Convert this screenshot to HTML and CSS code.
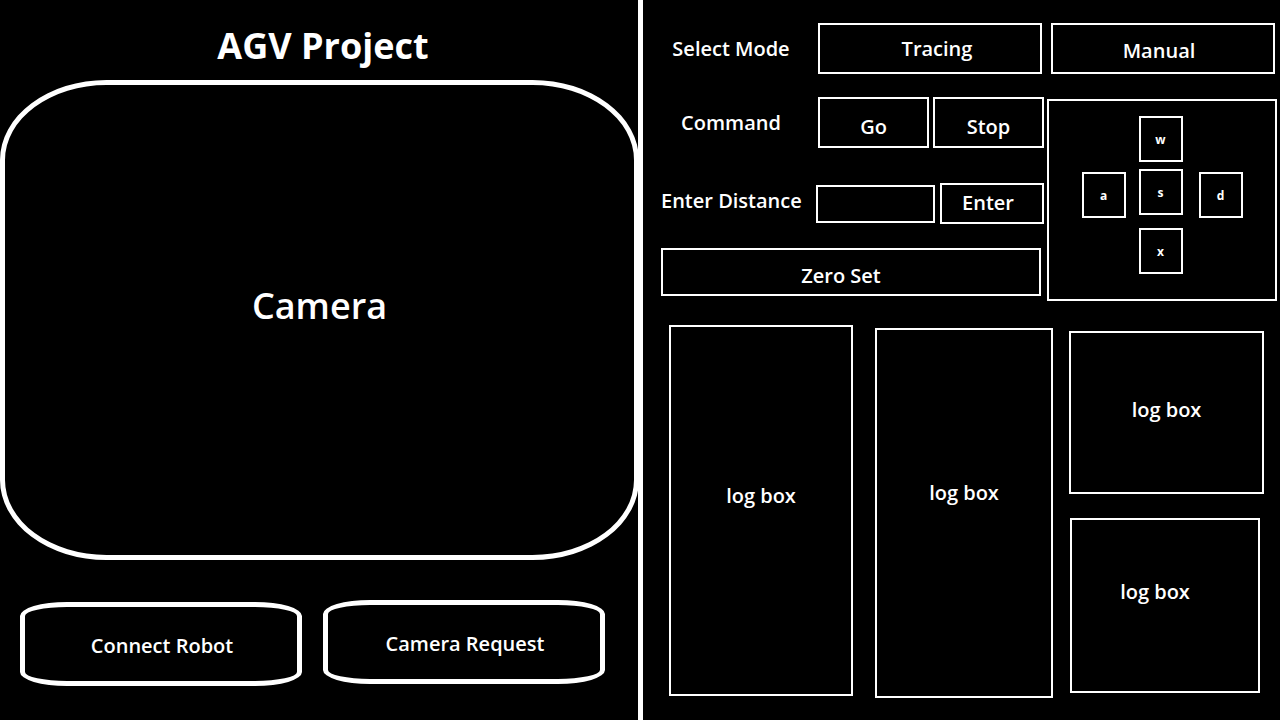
FILE: index.html
```html
<!DOCTYPE html>
<html lang="en">
<head>
<meta charset="utf-8">
<title>AGV Project</title>
<meta name="viewport" content="width=device-width, initial-scale=1">
<link rel="stylesheet" href="styles.css">
</head>
<body>
<div class="page">
  <main class="view">
    <h1 class="title">AGV Project</h1>
    <section class="camera">Camera</section>
    <div class="actions">
      <button type="button" class="action action-low">Connect Robot</button>
      <button type="button" class="action">Camera Request</button>
    </div>
  </main>
  <aside class="panel">
    <div class="row row-mode" role="group" aria-labelledby="mode-label">
      <span class="label" id="mode-label">Select Mode</span>
      <div class="choices">
        <button type="button" class="box tracing">Tracing</button>
        <button type="button" class="box manual">Manual</button>
      </div>
    </div>
    <div class="drive">
      <div class="controls">
        <div class="row row-command" role="group" aria-labelledby="command-label">
          <span class="label" id="command-label">Command</span>
          <div class="commands">
            <button type="button" class="box">Go</button>
            <button type="button" class="box">Stop</button>
          </div>
        </div>
        <form class="row row-distance">
          <label class="label" for="distance">Enter Distance</label>
          <div class="distance">
            <input class="field" id="distance" type="text">
            <button type="button" class="box">Enter</button>
          </div>
        </form>
        <button type="button" class="box zero">Zero Set</button>
      </div>
      <div class="keypad">
        <button type="button" class="key key-w">w</button>
        <button type="button" class="key key-a">a</button>
        <button type="button" class="key key-s">s</button>
        <button type="button" class="key key-d">d</button>
        <button type="button" class="key key-x">x</button>
      </div>
    </div>
    <div class="logs">
      <section class="log log-tall log-first">log box</section>
      <section class="log log-tall log-second">log box</section>
      <div class="log-stack">
        <section class="log log-upper">log box</section>
        <section class="log log-lower">log box</section>
      </div>
    </div>
  </aside>
</div>
</body>
</html>
```
FILE: styles.css
```css
* {
  box-sizing: border-box;
}

body {
  margin: 0;
  background: #000;
  color: #fff;
  font: 600 20px/28px "Open Sans", "Noto Sans", sans-serif;
}

button,
input {
  margin: 0;
  padding: 0;
  border: 2px solid #fff;
  border-radius: 0;
  background: #000;
  color: inherit;
  font: inherit;
}

.page {
  display: grid;
  grid-template-columns: minmax(0, 1fr) minmax(0, 1fr);
  min-height: 100vh;
}

/* Camera side */
.view {
  display: flex;
  flex-direction: column;
  margin-right: 2px;
  padding-bottom: 34px;
}

.title {
  margin: 0;
  padding: 22px 0 10px 8px;
  font-size: 36px;
  font-weight: 700;
  line-height: 48px;
  text-align: center;
}

.camera {
  flex: 1;
  display: flex;
  align-items: center;
  justify-content: center;
  margin-right: -1px;
  padding-bottom: 28px;
  border: 5px solid #fff;
  border-radius: calc(100% / 6);
  font-size: 36px;
  line-height: 48px;
}

.actions {
  display: flex;
  align-items: flex-start;
  gap: 21px;
  padding: 40px 33px 0 20px;
}

.action {
  flex: 1;
  height: 84px;
  padding: 4px 0 0 2px;
  border-width: 5px;
  border-radius: calc(100% / 6);
}

.action-low {
  margin-top: 2px;
}

/* Control side */
.panel {
  display: flex;
  flex-direction: column;
  margin-left: -2px;
  padding: 23px 3px 22px 18px;
  border-left: 5px solid #fff;
}

.row {
  display: grid;
  grid-template-columns: 140px minmax(0, 1fr);
  align-items: center;
  column-gap: 17px;
}

.label {
  text-align: center;
  white-space: nowrap;
}

.row-mode {
  margin-right: 2px;
}

.choices {
  display: grid;
  grid-template-columns: 1fr 1fr;
  grid-auto-rows: 51px;
  gap: 9px;
}

.tracing {
  padding-left: 14px;
}

.manual {
  padding: 4px 8px 0 0;
}

.drive {
  display: grid;
  grid-template-columns: minmax(0, 383fr) minmax(0, 230fr);
  gap: 3px;
  margin-top: 23px;
}

.controls {
  display: flex;
  flex-direction: column;
}

.commands {
  display: grid;
  grid-template-columns: 1fr 1fr;
  grid-auto-rows: 51px;
  gap: 4px;
}

.commands .box {
  padding-top: 8px;
}

.row-distance {
  column-gap: 15px;
  margin-top: 35px;
}

.row-distance .label {
  padding-bottom: 6px;
}

.distance {
  display: grid;
  grid-template-columns: minmax(0, 119fr) minmax(0, 104fr);
  grid-auto-rows: 41px;
  align-items: center;
  gap: 5px;
}

.distance .box {
  height: 100%;
  padding: 0 8px 2px 0;
}

.field {
  width: 100%;
  height: 38px;
  padding: 0 8px;
}

.zero {
  height: 48px;
  margin: 24px 3px 0 0;
  padding: 8px 20px 0 0;
}

.keypad {
  display: grid;
  grid-template-columns: 44px 13px 44px 16px 44px;
  grid-template-rows: 46px 7px 49px 10px 46px;
  justify-content: center;
  margin-top: 2px;
  padding: 15px 0 25px;
  border: 2px solid #fff;
}

.key {
  height: 46px;
  padding-top: 2px;
  font-size: 12px;
  font-weight: 700;
  line-height: 16px;
}

.key-w { grid-area: 1 / 3; }
.key-a { grid-area: 3 / 1; align-self: end; }
.key-s { grid-area: 3 / 3; }
.key-d { grid-area: 3 / 5; align-self: end; }
.key-x { grid-area: 5 / 3; }

/* Logs */
.logs {
  flex: 1;
  display: grid;
  grid-template-columns: minmax(0, 184fr) 22px minmax(0, 178fr) 16px minmax(0, 195fr);
  margin: 24px 13px 0 8px;
}

.log {
  display: flex;
  align-items: center;
  justify-content: center;
  border: 2px solid #fff;
}

.log-tall {
  padding-bottom: 36px;
}

.log-first {
  grid-column: 1;
  margin-bottom: 2px;
  padding-bottom: 30px;
}

.log-second {
  grid-column: 3;
  margin-top: 3px;
  padding-bottom: 40px;
}

.log-stack {
  grid-column: 5;
  display: grid;
  grid-template-rows: 163fr 175fr;
  gap: 24px;
  padding: 6px 0 5px;
}

.log-upper {
  padding-bottom: 6px;
}

.log-lower {
  margin: 0 4px 0 1px;
  padding: 0 20px 28px 0;
}
```
